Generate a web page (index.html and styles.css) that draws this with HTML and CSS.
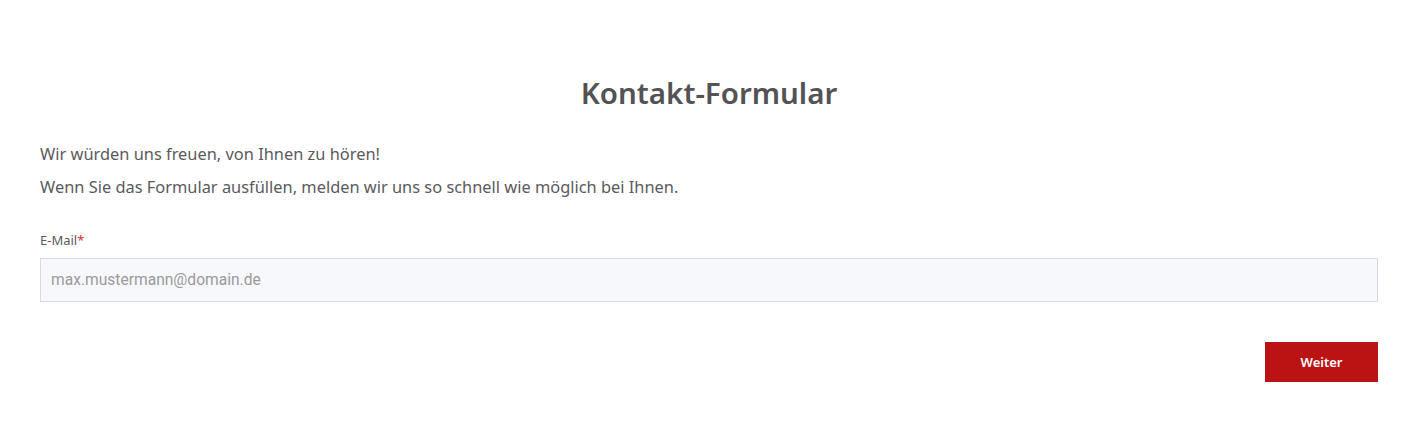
FILE: index.html
```html
<!DOCTYPE html>
<html lang="de">
<head>
  <meta charset="UTF-8" />
  <meta name="viewport" content="width=device-width, initial-scale=1.0"/>
  <title>Kontakt-Formular</title>
  <link rel="stylesheet" href="styles.css">
</head>
<body>
  <div class="formular">
    <h1>Kontakt-Formular</h1>
    <p class="intro">Wir würden uns freuen, von Ihnen zu hören!</p>
    <p class="intro">Wenn Sie das Formular ausfüllen, melden wir uns so schnell wie möglich bei Ihnen.</p>

    <label class="feld">
      <span class="feld-label">E-Mail<span class="pflicht">*</span></span>
      <input type="email" placeholder="max.mustermann@domain.de" />
    </label>

    <div class="aktionen">
      <button class="btn">Weiter</button>
    </div>
  </div>
</body>
</html>
```

FILE: styles.css
```css
body {
  font-family: "Noto Sans", sans-serif;
  background: #fff;
  margin: 0;
  color: #5a5a5c;
}
.formular {
  padding: 73px 40px 40px;
}
h1 {
  font-size: 29.5px;
  font-weight: 600;
  text-align: center;
  margin: 0 0 29px;
  line-height: 40px;
  color: #535355;
}
.intro {
  font-size: 16.4px;
  line-height: 24px;
  margin: 0 0 9px;
}
.feld {
  display: flex;
  flex-direction: column;
  margin-top: 32px;
}
.feld-label {
  font-size: 13px;
  line-height: 18px;
  margin-bottom: 9px;
}
.pflicht {
  color: #d32f2f;
}
input[type="email"] {
  height: 44px;
  box-sizing: border-box;
  border: 1px solid #d7dae6;
  background: #f7f8fc;
  padding: 0 10px;
  font-family: Roboto, sans-serif;
  font-size: 15.6px;
  color: #5a5a5c;
}
input::placeholder {
  color: #9a9a9c;
}
.aktionen {
  display: flex;
  justify-content: flex-end;
  margin-top: 40px;
}
.btn {
  width: 113px;
  height: 40px;
  border: none;
  background: #bb1214;
  color: #fff;
  font-family: "Noto Sans", sans-serif;
  font-weight: 600;
  font-size: 13px;
  cursor: pointer;
}
```
